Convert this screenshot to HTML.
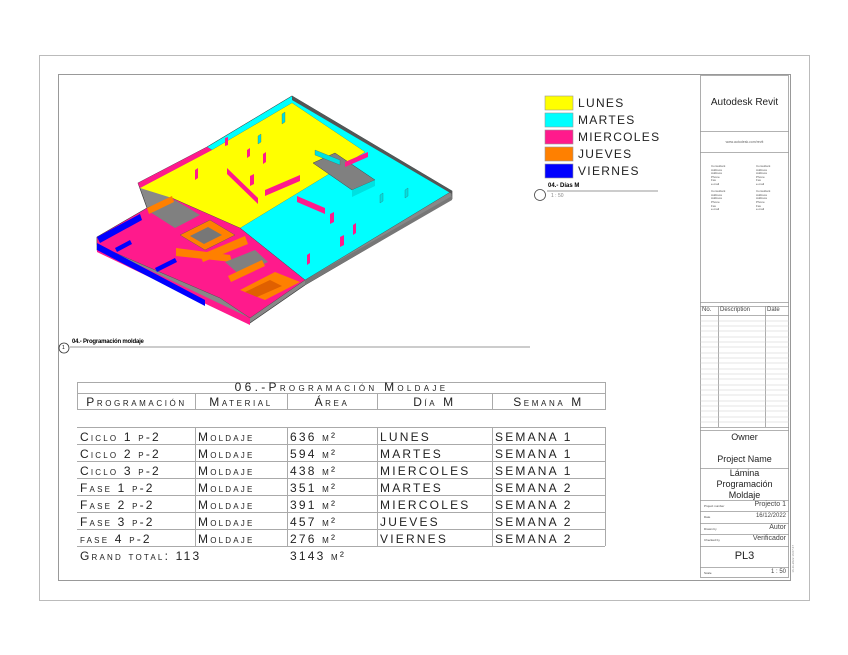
<!DOCTYPE html>
<html><head><meta charset="utf-8"><style>
body{margin:0;background:#fff;width:848px;height:655px;overflow:hidden;position:relative;font-family:"Liberation Sans",sans-serif}
.a{position:absolute}
.sc{font-variant:small-caps;letter-spacing:2.2px;font-size:12px;color:#222;white-space:nowrap}
.t{position:absolute;font-size:3px;color:#555;line-height:3.6px}
</style></head><body>
<div class="a" style="left:39px;top:55px;width:769px;height:544px;border:1px solid #bbb"></div>
<div class="a" style="left:58px;top:74px;width:731px;height:505px;border:1px solid #999"></div>

<svg class="a" style="left:0;top:0" width="848" height="655">
<polygon points="292,96 452,191 452,199 305,285 250,323 97,250 97,237 147,208 138,183 207,147" fill="#888" stroke="#333" stroke-width=".6"/>
<polygon points="97,245 250,318 250,325 97,252" fill="#ff1a8c"/>
<polygon points="305,280 452,196 452,200 305,285" fill="#777"/>
<polygon points="207,147 292,96 452,191 305,280 240,228 365,152 292,103 212,150" fill="#00ffff" stroke="#444" stroke-width=".4"/>
<polygon points="140,188 212,150 292,103 365,152 240,228 172,198" fill="#ffff00"/>
<polygon points="207,147 212,150 140,188 138,183" fill="#ff1a8c"/>
<polygon points="292,96 452,191 452,194 292,100" fill="#555"/>
<polygon points="313,163 335,153 375,180 352,190" fill="#808080" stroke="#444" stroke-width=".5"/>
<polygon points="352,190 375,180 375,186 352,197" fill="#00e0e0"/>
<polygon points="97,237 147,208 172,198 240,228 305,280 250,318 220,298 97,245" fill="#ff1a8c" stroke="#444" stroke-width=".4"/>
<polygon points="97,237 140,214 142,220 100,243" fill="#0000ff"/>
<polygon points="97,243 205,300 205,306 97,250" fill="#0000ff"/>
<polygon points="115,248 130,240 132,244 117,252" fill="#0000ff"/>
<polygon points="155,268 175,258 177,262 157,272" fill="#0000ff"/>
<polygon points="150,212 175,200 200,215 175,228" fill="#808080"/>
<polygon points="147,208 172,196 174,202 149,214" fill="#ff8000"/>
<polygon points="180,235 210,220 235,235 205,250" fill="#ff8000" stroke="#555" stroke-width=".4"/>
<polygon points="190,236 208,227 222,235 204,244" fill="#777"/>
<polygon points="176,248 230,255 232,262 176,256" fill="#ff8000"/>
<polygon points="200,255 245,236 248,244 203,262" fill="#ff8000"/>
<polygon points="225,262 255,250 268,262 240,275" fill="#808080"/>
<polygon points="240,290 275,272 300,282 265,300" fill="#ff8000"/>
<polygon points="245,292 270,280 282,286 257,297" fill="#e06000"/>
<polygon points="228,276 262,260 265,266 231,282" fill="#ff8000"/>
<g fill="#ff1a8c">
<polygon points="225,138 228,137 228,145 225,146"/><polygon points="247,150 250,148 250,156 247,158"/>
<polygon points="263,154 266,152 266,162 263,164"/><polygon points="195,170 198,168 198,178 195,180"/>
<polygon points="250,176 254,174 254,184 250,186"/><polygon points="227,168 258,198 258,204 227,174"/>
<polygon points="265,190 300,175 300,181 265,196"/><polygon points="297,196 325,208 325,214 297,202"/>
<polygon points="307,255 310,253 310,263 307,265"/><polygon points="330,214 334,212 334,222 330,224"/>
<polygon points="353,225 356,223 356,233 353,235"/><polygon points="340,237 344,235 344,245 340,247"/>
<polygon points="345,162 368,152 368,157 345,167"/>
</g>
<g fill="#00e0e0" stroke="#555" stroke-width=".3">
<polygon points="282,114 285,112 285,122 282,124"/><polygon points="258,136 261,134 261,142 258,144"/>
<polygon points="380,195 383,193 383,201 380,203"/><polygon points="405,190 408,188 408,196 405,198"/>
<polygon points="315,150 340,160 340,165 315,155"/>
</g>
<rect x="545" y="96" width="28" height="14" fill="#ffff00" stroke="#999" stroke-width=".6"/>
<rect x="545" y="113" width="28" height="14" fill="#00ffff" stroke="#999" stroke-width=".6"/>
<rect x="545" y="130" width="28" height="14" fill="#ff1a8c" stroke="#999" stroke-width=".6"/>
<rect x="545" y="147" width="28" height="14" fill="#ff8000" stroke="#999" stroke-width=".6"/>
<rect x="545" y="164" width="28" height="14" fill="#0000ff" stroke="#999" stroke-width=".6"/>
<circle cx="540" cy="195" r="5.5" fill="#fff" stroke="#444" stroke-width=".8"/>
<line x1="547" y1="191" x2="658" y2="191" stroke="#999"/>
<circle cx="64" cy="348" r="5" fill="#fff" stroke="#333" stroke-width=".8"/>
<line x1="70" y1="347" x2="530" y2="347" stroke="#999"/>
<g stroke="#aaa" stroke-width="1" fill="none">
<rect x="77.5" y="382.5" width="528" height="27"/>
<line x1="77" y1="393.5" x2="605" y2="393.5"/>
<line x1="195.5" y1="393" x2="195.5" y2="410"/><line x1="287.5" y1="393" x2="287.5" y2="410"/><line x1="377.5" y1="393" x2="377.5" y2="410"/><line x1="492.5" y1="393" x2="492.5" y2="410"/>
<line x1="77" y1="427.5" x2="605" y2="427.5"/><line x1="77" y1="444.5" x2="605" y2="444.5"/><line x1="77" y1="461.5" x2="605" y2="461.5"/><line x1="77" y1="478.5" x2="605" y2="478.5"/><line x1="77" y1="495.5" x2="605" y2="495.5"/><line x1="77" y1="512.5" x2="605" y2="512.5"/><line x1="77" y1="529.5" x2="605" y2="529.5"/><line x1="77" y1="546.5" x2="605" y2="546.5"/>
<line x1="195.5" y1="427" x2="195.5" y2="546"/><line x1="287.5" y1="427" x2="287.5" y2="546"/><line x1="377.5" y1="427" x2="377.5" y2="546"/><line x1="492.5" y1="427" x2="492.5" y2="546"/><line x1="605.5" y1="427" x2="605.5" y2="546"/>
</g>
<g stroke="#999" stroke-width=".8" fill="none">
<rect x="700.5" y="75.5" width="88" height="502"/>
<line x1="700" y1="131.5" x2="789" y2="131.5"/><line x1="700" y1="152.5" x2="789" y2="152.5"/>
<line x1="700" y1="302.5" x2="789" y2="302.5"/>
<line x1="700" y1="306.5" x2="789" y2="306.5"/><line x1="700" y1="315.5" x2="789" y2="315.5"/>
<line x1="718.5" y1="306" x2="718.5" y2="427"/><line x1="765.5" y1="306" x2="765.5" y2="427"/>
<line x1="700" y1="427.5" x2="789" y2="427.5"/><line x1="700" y1="430.5" x2="789" y2="430.5"/>
<line x1="700" y1="468.5" x2="789" y2="468.5"/>
<line x1="700" y1="500.5" x2="789" y2="500.5"/><line x1="700" y1="511.5" x2="789" y2="511.5"/><line x1="700" y1="523.5" x2="789" y2="523.5"/><line x1="700" y1="534.5" x2="789" y2="534.5"/><line x1="700" y1="546.5" x2="789" y2="546.5"/><line x1="700" y1="567.5" x2="789" y2="567.5"/>
</g>
<g stroke="#ccc" stroke-width=".6">
<line x1="700" y1="321" x2="789" y2="321"/><line x1="700" y1="326" x2="789" y2="326"/><line x1="700" y1="331" x2="789" y2="331"/><line x1="700" y1="337" x2="789" y2="337"/><line x1="700" y1="342" x2="789" y2="342"/><line x1="700" y1="347" x2="789" y2="347"/><line x1="700" y1="353" x2="789" y2="353"/><line x1="700" y1="358" x2="789" y2="358"/><line x1="700" y1="363" x2="789" y2="363"/><line x1="700" y1="369" x2="789" y2="369"/><line x1="700" y1="374" x2="789" y2="374"/><line x1="700" y1="379" x2="789" y2="379"/><line x1="700" y1="385" x2="789" y2="385"/><line x1="700" y1="390" x2="789" y2="390"/><line x1="700" y1="395" x2="789" y2="395"/><line x1="700" y1="401" x2="789" y2="401"/><line x1="700" y1="406" x2="789" y2="406"/><line x1="700" y1="411" x2="789" y2="411"/><line x1="700" y1="417" x2="789" y2="417"/><line x1="700" y1="422" x2="789" y2="422"/>
</g>
</svg>

<div class="a sc" style="left:578px;top:96px;letter-spacing:1.3px">LUNES</div>
<div class="a sc" style="left:578px;top:113px;letter-spacing:1.3px">MARTES</div>
<div class="a sc" style="left:578px;top:130px;letter-spacing:1.3px">MIERCOLES</div>
<div class="a sc" style="left:578px;top:147px;letter-spacing:1.3px">JUEVES</div>
<div class="a sc" style="left:578px;top:164px;letter-spacing:1.3px">VIERNES</div>
<div class="a" style="left:548px;top:183px;font-size:6px;font-weight:bold">04.- Días M</div>
<div class="a" style="left:551px;top:193px;font-size:5px;color:#888">1 : 50</div>
<div class="a" style="left:62px;top:345px;font-size:5px">1</div>
<div class="a" style="left:72px;top:339px;font-size:6px;font-weight:bold;letter-spacing:-.2px">04.- Programación moldaje</div>

<div class="a sc" style="left:77px;width:529px;text-align:center;top:380px;letter-spacing:3.3px">06.-Programación Moldaje</div>
<div class="a sc" style="left:78px;width:117px;text-align:center;top:395px;letter-spacing:2.6px">Programación</div>
<div class="a sc" style="left:195px;width:92px;text-align:center;top:395px;letter-spacing:2.6px">Material</div>
<div class="a sc" style="left:287px;width:90px;text-align:center;top:395px;letter-spacing:2.6px">Área</div>
<div class="a sc" style="left:377px;width:115px;text-align:center;top:395px;letter-spacing:2.6px">Día M</div>
<div class="a sc" style="left:492px;width:113px;text-align:center;top:395px;letter-spacing:2.6px">Semana M</div>
<div class="a sc" style="left:80px;top:429px;line-height:17px">Ciclo 1 p-2<br>Ciclo 2 p-2<br>Ciclo 3 p-2<br>Fase 1 p-2<br>Fase 2 p-2<br>Fase 3 p-2<br>fase 4 p-2<br>Grand total: 113</div>
<div class="a sc" style="left:198px;top:429px;line-height:17px">Moldaje<br>Moldaje<br>Moldaje<br>Moldaje<br>Moldaje<br>Moldaje<br>Moldaje</div>
<div class="a sc" style="left:290px;top:429px;line-height:17px">636 m²<br>594 m²<br>438 m²<br>351 m²<br>391 m²<br>457 m²<br>276 m²<br>3143 m²</div>
<div class="a sc" style="left:380px;top:429px;line-height:17px">LUNES<br>MARTES<br>MIERCOLES<br>MARTES<br>MIERCOLES<br>JUEVES<br>VIERNES</div>
<div class="a sc" style="left:495px;top:429px;line-height:17px">SEMANA 1<br>SEMANA 1<br>SEMANA 1<br>SEMANA 2<br>SEMANA 2<br>SEMANA 2<br>SEMANA 2</div>

<div class="a" style="left:700px;width:89px;text-align:center;top:97px;font-size:10px;color:#222">Autodesk Revit</div>
<div class="a" style="left:700px;width:89px;text-align:center;top:140px;font-size:3.5px;color:#666">www.autodesk.com/revit</div>
<div class="t" style="left:711px;top:165px">Consultant<br>Address<br>Address<br>Phone<br>Fax<br>e-mail<br><br>Consultant<br>Address<br>Address<br>Phone<br>Fax<br>e-mail</div>
<div class="t" style="left:756px;top:165px">Consultant<br>Address<br>Address<br>Phone<br>Fax<br>e-mail<br><br>Consultant<br>Address<br>Address<br>Phone<br>Fax<br>e-mail</div>
<div class="a" style="left:702px;top:307px;font-size:6px;color:#444">No.</div>
<div class="a" style="left:720px;top:307px;font-size:6px;color:#444">Description</div>
<div class="a" style="left:767px;top:307px;font-size:6px;color:#444">Date</div>
<div class="a" style="left:700px;width:89px;text-align:center;top:432px;font-size:9px;color:#222">Owner</div>
<div class="a" style="left:700px;width:89px;text-align:center;top:454px;font-size:9px;color:#222">Project Name</div>
<div class="a" style="left:700px;width:89px;text-align:center;top:468px;font-size:9px;line-height:11px;color:#222">Lámina<br>Programación<br>Moldaje</div>
<div class="a" style="left:704px;top:504px;font-size:3px;color:#444">Project number</div>
<div class="a" style="left:740px;width:46px;text-align:right;top:501px;font-size:7px;color:#444">Projecto 1</div>
<div class="a" style="left:704px;top:515px;font-size:3px;color:#444">Date</div>
<div class="a" style="left:740px;width:46px;text-align:right;top:513px;font-size:6px;color:#444">16/12/2022</div>
<div class="a" style="left:704px;top:527px;font-size:3px;color:#444">Drawn by</div>
<div class="a" style="left:740px;width:46px;text-align:right;top:524px;font-size:7px;color:#444">Autor</div>
<div class="a" style="left:704px;top:538px;font-size:3px;color:#444">Checked by</div>
<div class="a" style="left:740px;width:46px;text-align:right;top:535px;font-size:7px;color:#444">Verificador</div>
<div class="a" style="left:700px;width:89px;text-align:center;top:550px;font-size:11px;color:#222">PL3</div>
<div class="a" style="left:704px;top:571px;font-size:3px;color:#444">Scale</div>
<div class="a" style="left:740px;width:46px;text-align:right;top:569px;font-size:6px;color:#444">1 : 50</div>
<div class="a" style="left:791px;top:545px;font-size:3px;color:#888;writing-mode:vertical-rl;transform:rotate(180deg)">16-11-2022 16:07:47</div>
</body></html>
